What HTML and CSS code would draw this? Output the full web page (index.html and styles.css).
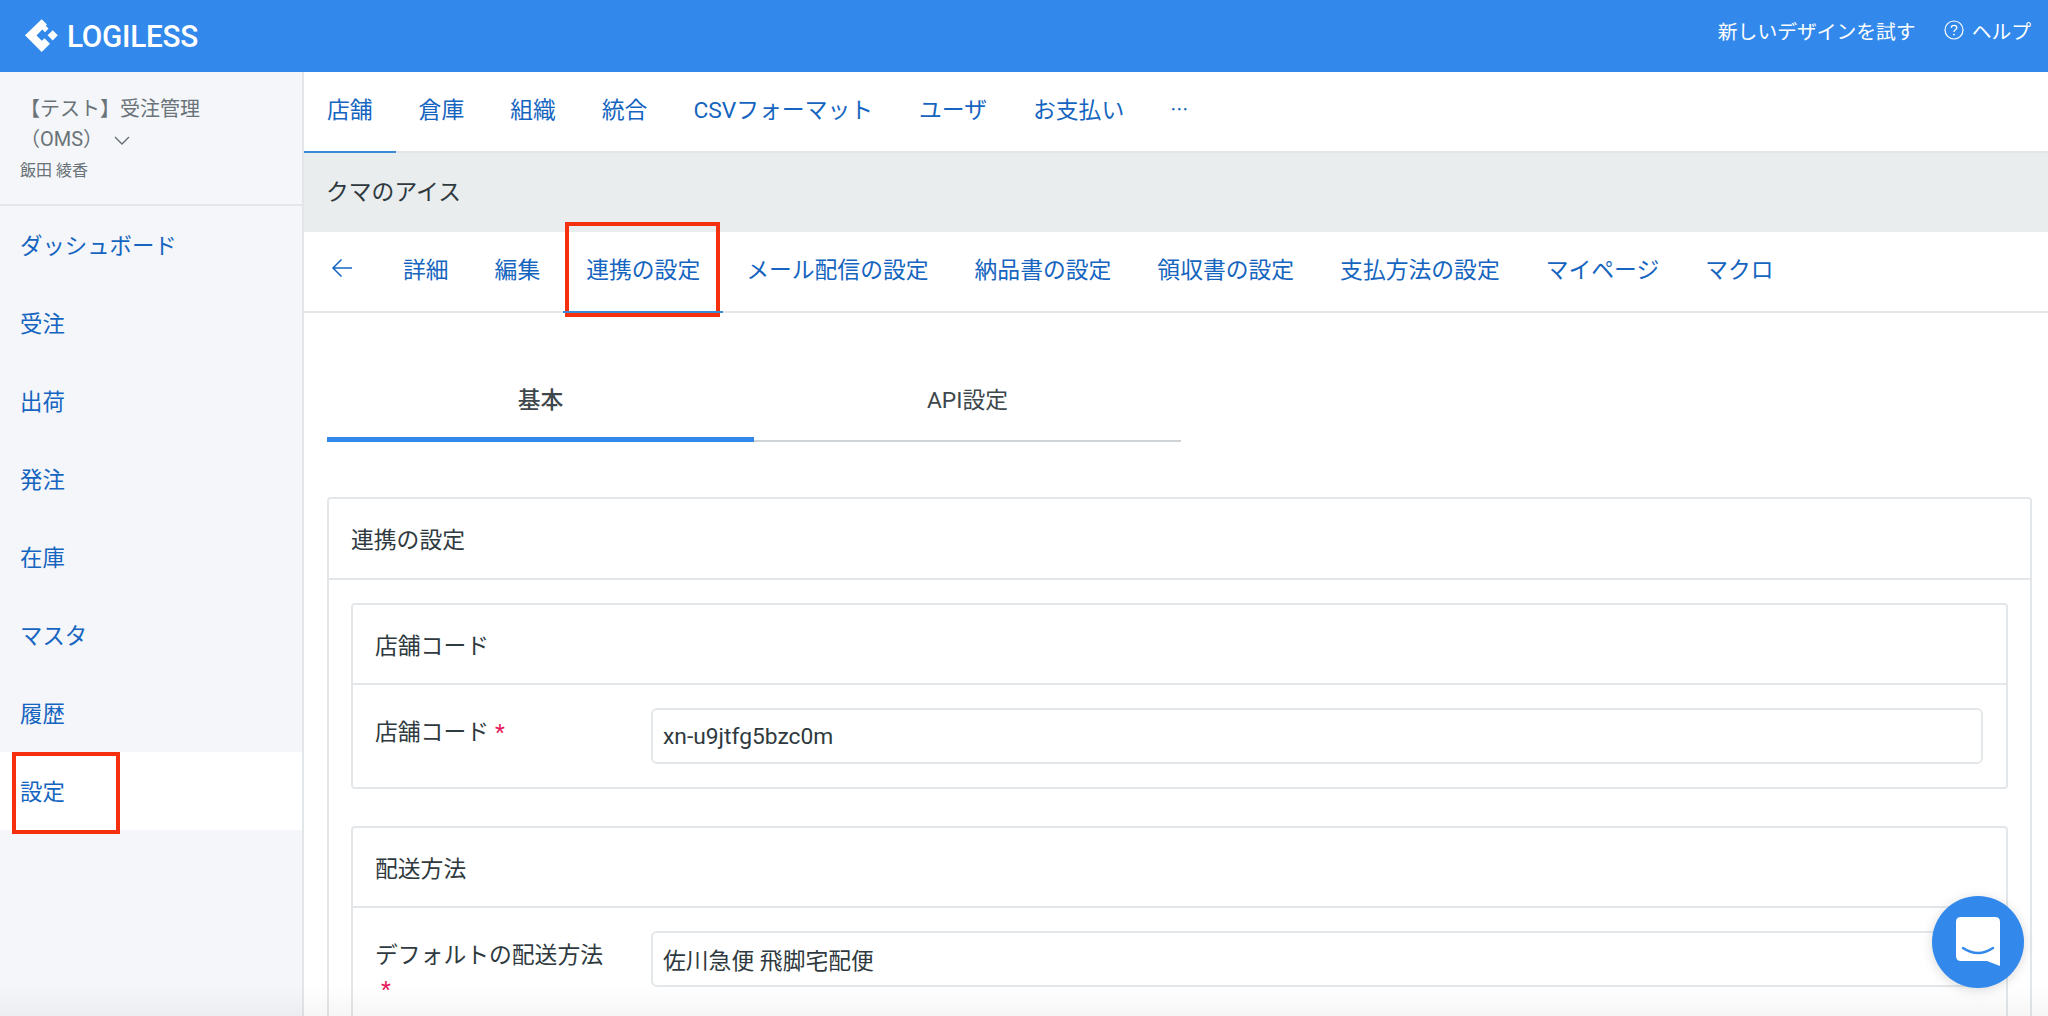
FILE: index.html
```html
<!DOCTYPE html>
<html lang="ja">
<head>
    <meta charset="UTF-8">
    <title>LOGILESS</title>
    <link rel="stylesheet" href="styles.css">
</head>
<body>
    <header class="topbar">
        <div class="logo">
            <svg class="logo-mark" width="44" height="44" viewBox="0 0 44 44">
                <path fill="#fff" d="M21.7 5.3 L27 10.6 L16.5 21.5 L21.85 26.85 L24.5 24.2 L30 29.7 L21.7 38 L5 21.3 Z"/>
                <path fill="#fff" d="M25 11 L28.5 14.6 L25 18.2 L21.5 14.6 Z"/>
                <path fill="#fff" d="M32.7 16.3 L37.8 21.3 L32.7 26.4 L27.6 21.3 Z"/>
            </svg>
            <span class="logo-text">LOGILESS</span>
        </div>
        <div class="topbar-links">
            <span>新しいデザインを試す</span>
            <span class="help">
                <svg width="20" height="20" viewBox="0 0 20 20">
                    <circle cx="10" cy="10" r="9" fill="none" stroke="#fff" stroke-width="1.2"/>
                    <path d="M7.3 7.8 C7.3 4.6 12.8 4.6 12.8 7.8 C12.8 9.8 10 9.8 10 12" fill="none" stroke="#fff" stroke-width="1.3"/>
                    <circle cx="10" cy="14.6" r="0.9" fill="#fff"/>
                </svg>
                ヘルプ
            </span>
        </div>
    </header>

    <div class="layout">
        <aside class="sidebar">
            <div class="account">
                <div class="account-name">【テスト】受注管理<br>（OMS）
                    <svg class="chevron" width="16" height="10" viewBox="0 0 16 10"><path d="M1 1 L8 8 L15 1" fill="none" stroke="#666f75" stroke-width="1.4"/></svg>
                </div>
                <div class="account-user">飯田 綾香</div>
            </div>
            <nav class="side-nav">
                <a>ダッシュボード</a>
                <a>受注</a>
                <a>出荷</a>
                <a>発注</a>
                <a>在庫</a>
                <a>マスタ</a>
                <a>履歴</a>
                <a class="active">設定<span class="mark mark-side"></span></a>
            </nav>
        </aside>

        <main class="main">
            <nav class="tabs">
                <a class="active">店舗</a>
                <a>倉庫</a>
                <a>組織</a>
                <a>統合</a>
                <a>CSVフォーマット</a>
                <a>ユーザ</a>
                <a>お支払い</a>
                <a class="more">…</a>
            </nav>
            <div class="shop-band">クマのアイス</div>
            <nav class="tabs tabs-sub">
                <a class="back">
                    <svg width="22" height="20" viewBox="0 0 22 20"><path d="M21 10 H2 M10.5 1.5 L2 10 L10.5 18.5" fill="none" stroke="#1565c0" stroke-width="1.5"/></svg>
                </a>
                <a>詳細</a>
                <a>編集</a>
                <a class="active">連携の設定<span class="mark mark-sub"></span></a>
                <a>メール配信の設定</a>
                <a>納品書の設定</a>
                <a>領収書の設定</a>
                <a>支払方法の設定</a>
                <a>マイページ</a>
                <a>マクロ</a>
            </nav>

            <div class="content">
                <div class="switch">
                    <div class="switch-item active">基本</div>
                    <div class="switch-item">API設定</div>
                </div>

                <section class="card">
                    <h2 class="card-head">連携の設定</h2>
                    <div class="card-body">
                        <section class="card inner">
                            <h3 class="card-head">店舗コード</h3>
                            <div class="field">
                                <label>店舗コード<span class="req">*</span></label>
                                <div class="input">xn-u9jtfg5bzc0m</div>
                            </div>
                        </section>
                        <section class="card inner">
                            <h3 class="card-head">配送方法</h3>
                            <div class="field">
                                <label>デフォルトの配送方法 <span class="req">*</span></label>
                                <div class="input">佐川急便 飛脚宅配便</div>
                            </div>
                        </section>
                    </div>
                </section>
            </div>
        </main>
    </div>

    <button class="chat">
        <svg width="44" height="50" viewBox="0 0 44 50">
            <path fill="#fff" d="M5 0 H39 Q44 0 44 5 V49 L31 44 H5 Q0 44 0 39 V5 Q0 0 5 0 Z"/>
            <path d="M7 31 Q22 41 37 31" fill="none" stroke="#3289eb" stroke-width="2.4" stroke-linecap="round"/>
        </svg>
    </button>
    <div class="bottom-fade"></div>
</body>
</html>
```

FILE: styles.css
```css
body {
    margin: 0;
    height: 1016px;
    overflow: hidden;
    font-family: "Roboto", "Noto Sans CJK JP", sans-serif;
    font-size: 22.8px;
    color: #2f3a40;
    background-color: #fff;
}
a {
    color: #1565c0;
}

/* top bar */
.topbar {
    height: 72px;
    background-color: #3289eb;
    color: #fff;
    display: flex;
    align-items: center;
    justify-content: space-between;
    padding: 0 17px 0 20px;
}
.logo {
    display: flex;
    align-items: center;
    gap: 3px;
}
.logo-text {
    font-size: 31px;
    font-weight: 500;
    letter-spacing: -0.3px;
    transform: scaleX(0.96);
    transform-origin: left;
}
.topbar-links {
    display: flex;
    align-items: center;
    gap: 28px;
    font-size: 19.8px;
    padding-bottom: 12px;
}
.help {
    display: flex;
    align-items: center;
    gap: 8px;
}

/* sidebar */
.layout {
    display: flex;
    height: 944px;
}
.sidebar {
    width: 302px;
    flex: none;
    background-color: #f4f6fa;
    border-right: 2px solid #e3e6e8;
}
.account {
    height: 134px;
    box-sizing: border-box;
    padding: 22px 20px 0;
    border-bottom: 2px solid #e3e6e8;
    color: #6a7378;
}
.account-name {
    font-size: 20px;
    line-height: 30px;
}
.chevron {
    margin-left: 6px;
}
.account-user {
    font-size: 16px;
    line-height: 20px;
    margin-top: 7px;
}
.side-nav {
    display: flex;
    flex-direction: column;
}
.side-nav a {
    position: relative;
    height: 78px;
    box-sizing: border-box;
    display: flex;
    align-items: center;
    padding: 0 0 2px 20px;
    font-size: 22.4px;
}
.side-nav a.active {
    background-color: #fff;
}

/* red marks drawn over the screenshot */
.mark {
    position: absolute;
    border: 4px solid #f5300f;
    box-sizing: border-box;
}
.mark-side {
    left: 12px;
    top: 0;
    width: 108px;
    height: 82px;
}
.mark-sub {
    left: -21px;
    top: -10px;
    width: 155px;
    height: 95px;
}

/* tabs */
.main {
    flex: 1;
    min-width: 0;
}
.tabs {
    height: 81px;
    box-sizing: border-box;
    display: flex;
    gap: 46px;
    padding-left: 23px;
    border-bottom: 2px solid #e3e6e8;
}
.tabs a {
    position: relative;
    height: 100%;
    box-sizing: border-box;
    padding-bottom: 7px;
    display: flex;
    align-items: center;
    white-space: nowrap;
}
.tabs a.active::after {
    content: "";
    position: absolute;
    left: -23px;
    right: -23px;
    bottom: -2px;
    height: 2px;
    background-color: #3a8ad6;
}
.tabs .more {
    font-family: "Noto Sans CJK JP", sans-serif;
    font-size: 18px;
}
.shop-band {
    height: 79px;
    box-sizing: border-box;
    padding: 0 22px 5px;
    display: flex;
    align-items: center;
    background-color: #e9edee;
}
.back {
    width: 30px;
    padding-left: 4px;
}

/* content */
.content {
    padding: 69px 16px 0 23px;
}
.switch {
    display: flex;
    width: 854px;
    margin-bottom: 55px;
}
.switch-item {
    flex: 1;
    height: 60px;
    box-sizing: border-box;
    text-align: center;
    border-bottom: 2px solid #cfd3d6;
    color: #3d474c;
}
.switch-item.active {
    border-bottom: 5px solid #3289eb;
    font-weight: 500;
}
.card {
    border: 2px solid #e4e7e9;
    border-radius: 4px;
    background-color: #fff;
}
.card-head {
    margin: 0;
    height: 81px;
    box-sizing: border-box;
    padding: 0 22px;
    display: flex;
    align-items: center;
    font-size: 22.8px;
    font-weight: 400;
    border-bottom: 2px solid #e4e7e9;
}
.inner .card-head {
    height: 80px;
}
.card-body {
    padding: 23px 22px;
}
.inner {
    margin-bottom: 37px;
}
.field {
    display: flex;
    padding: 23px 23px 23px 22px;
}
.field label {
    width: 276px;
    flex: none;
    padding-right: 40px;
    box-sizing: border-box;
    line-height: 34px;
    margin-top: 8px;
}
.req {
    display: inline-block;
    margin-left: 6px;
    color: #e8175d;
}
.input {
    flex: 1;
    height: 56px;
    box-sizing: border-box;
    border: 2px solid #e4e7e9;
    border-radius: 6px;
    padding: 0 10px;
    display: flex;
    align-items: center;
}

/* chat */
.chat {
    position: absolute;
    left: 1932px;
    top: 896px;
    width: 92px;
    height: 92px;
    border: 0;
    border-radius: 50%;
    background-color: #3289eb;
    box-shadow: 0 2px 12px rgba(0, 0, 0, 0.15);
    display: flex;
    align-items: center;
    justify-content: center;
    padding: 0;
}

/* faint fade along the bottom edge */
.bottom-fade {
    position: absolute;
    left: 0;
    right: 0;
    top: 984px;
    height: 32px;
    background: linear-gradient(rgba(0, 0, 0, 0), rgba(0, 0, 0, 0.035));
    pointer-events: none;
}
```
